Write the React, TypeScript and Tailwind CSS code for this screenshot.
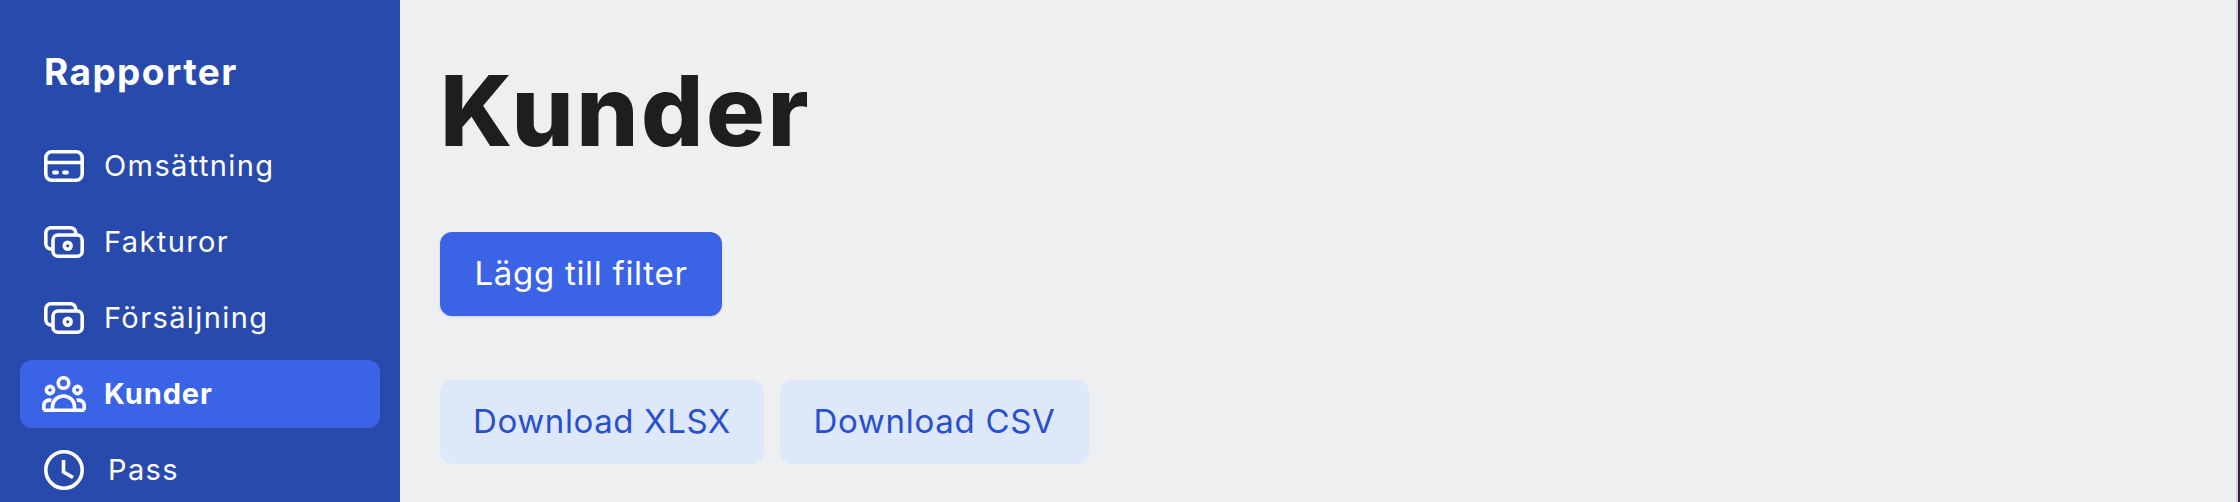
import type { ReactNode } from 'react';

function CardIcon() {
  return (
    <svg width="40" height="32" viewBox="0 0 40 32" fill="none" stroke="white" strokeWidth="3.6">
      <rect x="1.8" y="1.8" width="36.4" height="28.4" rx="6" />
      <path d="M1.8 12.5h36.4" />
      <path d="M10 22.5h3M20 22.5h3" strokeLinecap="round" strokeWidth="3.8" />
    </svg>
  );
}

function CashIcon() {
  return (
    <svg width="40" height="32" viewBox="0 0 40 32" fill="none" stroke="white" strokeWidth="3.6">
      <path d="M8 23H7a5.2 5.2 0 0 1-5.2-5.2V7A5.2 5.2 0 0 1 7 1.8h19.5A5.2 5.2 0 0 1 31.7 7v2" />
      <rect x="9" y="9" width="29.2" height="21.2" rx="5" />
      <circle cx="23.7" cy="19.8" r="3.4" />
    </svg>
  );
}

function UsersIcon() {
  return (
    <svg width="44" height="36" viewBox="0 0 44 36" fill="none" stroke="white" strokeWidth="3.6">
      <circle cx="21.5" cy="7" r="5.3" />
      <circle cx="8" cy="14" r="3.6" />
      <circle cx="35.5" cy="14" r="3.6" />
      <path d="M1.5 34.2h41" />
      <path d="M10.5 34v-3.5a11 10.5 0 0 1 22 0V34" />
      <path d="M1.8 34v-4.5a5.5 5.5 0 0 1 7.5-5" />
      <path d="M42.2 34v-4.5a5.5 5.5 0 0 0-7.5-5" />
    </svg>
  );
}

function ClockIcon() {
  return (
    <svg width="40" height="40" viewBox="0 0 40 40" fill="none" stroke="white" strokeWidth="3.6">
      <circle cx="20" cy="20" r="18.2" />
      <path d="M19.5 10v12l9.5 5.5" />
    </svg>
  );
}

function NavItem({ icon, label, active, gap }: { icon: ReactNode; label: string; active?: boolean; gap: string }) {
  return (
    <div className={`flex h-[68px] items-center rounded-xl ${active ? 'bg-[#3a64e5] pl-[22px] font-bold tracking-[0.9px]' : 'pl-6 font-normal tracking-[1.4px]'}`}>
      <span className={`flex shrink-0 items-center justify-center ${gap}`}>{icon}</span>
      <span className="text-[29px] text-white">{label}</span>
    </div>
  );
}

export default function App() {
  return (
    <div className="flex h-[502px] overflow-hidden bg-[#eeeff1] font-['Inter',sans-serif]">
      <aside className="w-[400px] shrink-0 bg-[#284aad] px-5">
        <h2 className="pt-[50px] pl-6 text-[37px] leading-[44px] font-bold tracking-[1.4px] text-white">Rapporter</h2>
        <nav className="mt-[38px] flex flex-col gap-2">
          <NavItem icon={<CardIcon />} label="Omsättning" gap="mr-5" />
          <NavItem icon={<CashIcon />} label="Fakturor" gap="mr-5" />
          <NavItem icon={<CashIcon />} label="Försäljning" gap="mr-5" />
          <NavItem icon={<UsersIcon />} label="Kunder" active gap="mr-[18px]" />
          <NavItem icon={<ClockIcon />} label="Pass" gap="mr-6" />
        </nav>
      </aside>
      <main className="flex-1 pl-10">
        <h1 className="pt-[56px] text-[98px] leading-[110px] font-extrabold tracking-[2.5px] text-[#1e1e1e]">Kunder</h1>
        <button className="mt-[66px] block h-[84px] w-[282px] rounded-xl bg-[#3a64e5] text-[33px] tracking-[0.7px] text-white shadow-sm">
          Lägg till filter
        </button>
        <div className="mt-16 flex gap-4">
          <button className="h-[84px] w-[324px] rounded-xl bg-[#dee8fb] text-[33px] tracking-[0.6px] text-[#284fd0]">Download XLSX</button>
          <button className="h-[84px] w-[309px] rounded-xl bg-[#dee8fb] text-[33px] tracking-[0.7px] text-[#284fd0]">Download CSV</button>
        </div>
      </main>
      <div className="w-0.5 shrink-0 bg-[#d4d4d8]" />
      <div className="w-0.5 shrink-0 bg-[#3a1a4a]" />
    </div>
  );
}
